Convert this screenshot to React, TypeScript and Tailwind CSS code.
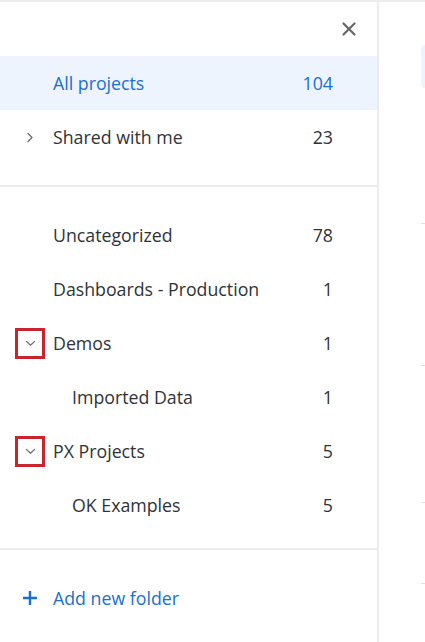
import React from "react";

type Row = {
  label: string;
  count: number;
  chevron?: "right" | "down";
  indent?: boolean;
  active?: boolean;
  marked?: boolean;
};

const top: Row[] = [
  { label: "All projects", count: 104, active: true },
  { label: "Shared with me", count: 23, chevron: "right" },
];

const folders: Row[] = [
  { label: "Uncategorized", count: 78 },
  { label: "Dashboards - Production", count: 1 },
  { label: "Demos", count: 1, chevron: "down", marked: true },
  { label: "Imported Data", count: 1, indent: true },
  { label: "PX Projects", count: 5, chevron: "down", marked: true },
  { label: "OK Examples", count: 5, indent: true },
];

const Chevron = ({ dir }: { dir: "right" | "down" }) =>
  dir === "right" ? (
    <svg width="8" height="11" viewBox="0 0 8 11" fill="none">
      <path d="M2 1.5 L6 5.5 L2 9.5" stroke="#6b6b6b" strokeWidth="1.3" strokeLinecap="round" strokeLinejoin="round" />
    </svg>
  ) : (
    <svg width="11" height="7" viewBox="0 0 11 7" fill="none">
      <path d="M1.5 1.5 L5.5 5.2 L9.5 1.5" stroke="#7a7a7a" strokeWidth="1.3" strokeLinecap="round" strokeLinejoin="round" />
    </svg>
  );

const FolderRow = ({ row }: { row: Row }) => (
  <div
    className={`flex h-[54px] items-center pr-[44px] ${row.active ? "bg-[#edf4fd] text-[#1a6fd1]" : "text-[#2f3337]"}`}
  >
    <div className="flex w-[53px] items-center pl-[15px]">
      {row.chevron && (
        <div
          className={`flex h-[31px] w-[30px] items-center justify-center ${row.marked ? "border-[3px] border-[#c9252f]" : ""}`}
        >
          <Chevron dir={row.chevron} />
        </div>
      )}
    </div>
    <span className={`flex-1 ${row.indent ? "pl-[19px]" : ""}`}>{row.label}</span>
    <span>{row.count}</span>
  </div>
);

export default function App() {
  return (
    <div
      className="flex h-[642px] w-[425px] overflow-hidden border-t-2 border-[#ececec] bg-white text-[17.75px]"
      style={{ fontFamily: '"Open Sans", "Noto Sans", sans-serif' }}
    >
      <aside className="flex w-[379px] shrink-0 flex-col border-r-2 border-[#ececec]">
        <div className="flex h-[54px] items-center justify-end pr-[20px]">
          <svg width="16" height="16" viewBox="0 0 16 16" fill="none">
            <path d="M2.5 2.5 L13.5 13.5 M13.5 2.5 L2.5 13.5" stroke="#666" strokeWidth="2.2" strokeLinecap="round" />
          </svg>
        </div>

        {top.map((r) => (
          <FolderRow key={r.label} row={r} />
        ))}

        <div className="mt-[21px] h-[2px] bg-[#ececec]" />

        <div className="pt-[21px]">
          {folders.map((r) => (
            <FolderRow key={r.label} row={r} />
          ))}
        </div>

        <div className="mt-[16px] h-[2px] bg-[#ececec]" />

        <div className="mt-[21px] flex h-[54px] items-center text-[#1a6fd1]">
          <div className="flex w-[53px] items-center pl-[22px]">
            <svg width="16" height="16" viewBox="0 0 16 16" fill="none">
              <path d="M8 1 V15 M1 8 H15" stroke="#1a6fd1" strokeWidth="2.4" />
            </svg>
          </div>
          <span>Add new folder</span>
        </div>
      </aside>

      <div className="flex flex-1 flex-col items-end pt-[43px]">
        <div className="h-[43px] w-[4px] rounded-l-md bg-[#eef4fc]" />
        <div className="mt-[135px] h-px w-[4px] bg-[#e2e2e2]" />
        <div className="mt-[141px] h-px w-[4px] bg-[#e2e2e2]" />
        <div className="mt-[136px] h-px w-[4px] bg-[#e2e2e2]" />
        <div className="mt-[80px] h-px w-[4px] bg-[#e2e2e2]" />
      </div>
    </div>
  );
}
